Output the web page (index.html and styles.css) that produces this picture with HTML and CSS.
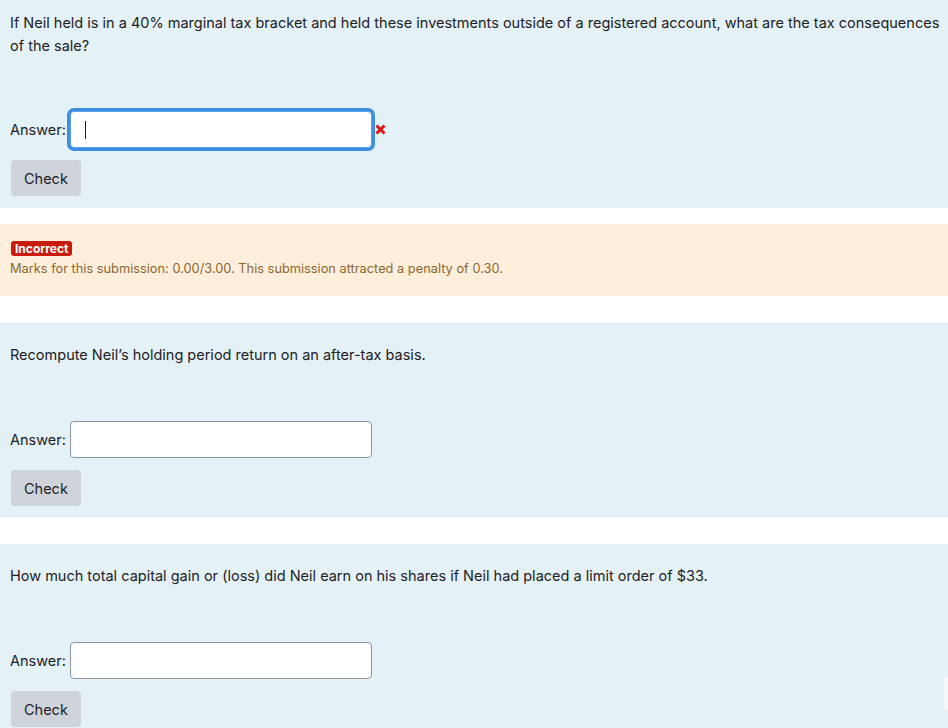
FILE: index.html
```html
<!DOCTYPE html>
<html lang="en">
<head>
<meta charset="utf-8">
<title>Quiz</title>
<link rel="stylesheet" href="styles.css">
</head>
<body>
<div class="que que-first">
  <div class="qtext">If Neil held is in a 40% marginal tax bracket and held these investments outside of a registered account, what are the tax consequences of the sale?</div>
  <div class="ablock">
    <label class="alabel">Answer:</label>
    <span class="answer focused"><span class="caret"></span></span>
    <svg class="xicon" width="11" height="11" viewBox="0 0 11 11"><path d="M1.5 1.5 L9.5 9.5 M9.5 1.5 L1.5 9.5" stroke="#e0120f" stroke-width="3" stroke-linecap="butt"/></svg>
  </div>
  <button class="check">Check</button>
</div>
<div class="outcome">
  <div class="badge-row"><span class="badge">Incorrect</span></div>
  <div class="marks">Marks for this submission: 0.00/3.00. This submission attracted a penalty of 0.30.</div>
</div>
<div class="que">
  <div class="qtext">Recompute Neil’s holding period return on an after-tax basis.</div>
  <div class="ablock">
    <label class="alabel">Answer:</label>
    <span class="answer"></span>
  </div>
  <button class="check">Check</button>
</div>
<div class="que">
  <div class="qtext">How much total capital gain or (loss) did Neil earn on his shares if Neil had placed a limit order of $33.</div>
  <div class="ablock">
    <label class="alabel">Answer:</label>
    <span class="answer"></span>
  </div>
  <button class="check">Check</button>
</div>
<div class="edge-tab"></div>
</body>
</html>
```
FILE: styles.css
```css
html, body {
  margin: 0;
  padding: 0;
  background: #ffffff;
  font-family: Inter, Roboto, "Liberation Sans", sans-serif;
  font-size: 14.5px;
  color: #1d2125;
  overflow: hidden;
}
body {
  position: relative;
  height: 728px;
}
.que {
  background: #e4f1f6;
  padding: 20px 2px 11px 10px;
  margin-top: 27px;
}
.que-first {
  margin-top: 0;
  padding-top: 11px;
  padding-bottom: 12px;
}
.qtext {
  line-height: 23px;
}
.ablock {
  display: flex;
  align-items: center;
  margin-top: 55px;
  height: 37px;
}
.que-first .ablock {
  margin-top: 54px;
}
.alabel {
  margin-right: 4px;
}
.answer {
  display: flex;
  align-items: center;
  box-sizing: border-box;
  width: 302px;
  height: 37px;
  background: #ffffff;
  border: 1px solid #8f959e;
  border-radius: 4px;
}
.answer.focused {
  border-color: #5aa0e6;
  box-shadow: 0 0 0 3px #3d8de0;
}
.caret {
  display: block;
  width: 1px;
  height: 18px;
  background: #1d2125;
  margin-left: 14px;
}
.xicon {
  margin-left: 3px;
}
.check {
  display: block;
  margin-top: 12px;
  margin-left: 1px;
  height: 36px;
  padding: 0 13px;
  border: none;
  border-radius: 4px;
  background: #ced4da;
  color: #1d2125;
  font-family: inherit;
  font-size: 14.5px;
}
.outcome {
  margin-top: 16px;
  background: #fdefdc;
  padding: 17px 10px 17px 10px;
  color: #8e662e;
}
.badge-row {
  display: flex;
  height: 15px;
}
.badge {
  display: block;
  background: #ca1c0e;
  color: #ffffff;
  font-size: 12px;
  font-weight: bold;
  line-height: 15px;
  padding: 0 4px;
  border-radius: 3px;
  margin-left: 1px;
}
.marks {
  font-size: 12.8px;
  line-height: 21px;
  margin-top: 2px;
}
.edge-tab {
  position: absolute;
  right: -8px;
  top: 676px;
  width: 12px;
  height: 35px;
  border-radius: 5px;
  background: #f5f9fb;
}
```
